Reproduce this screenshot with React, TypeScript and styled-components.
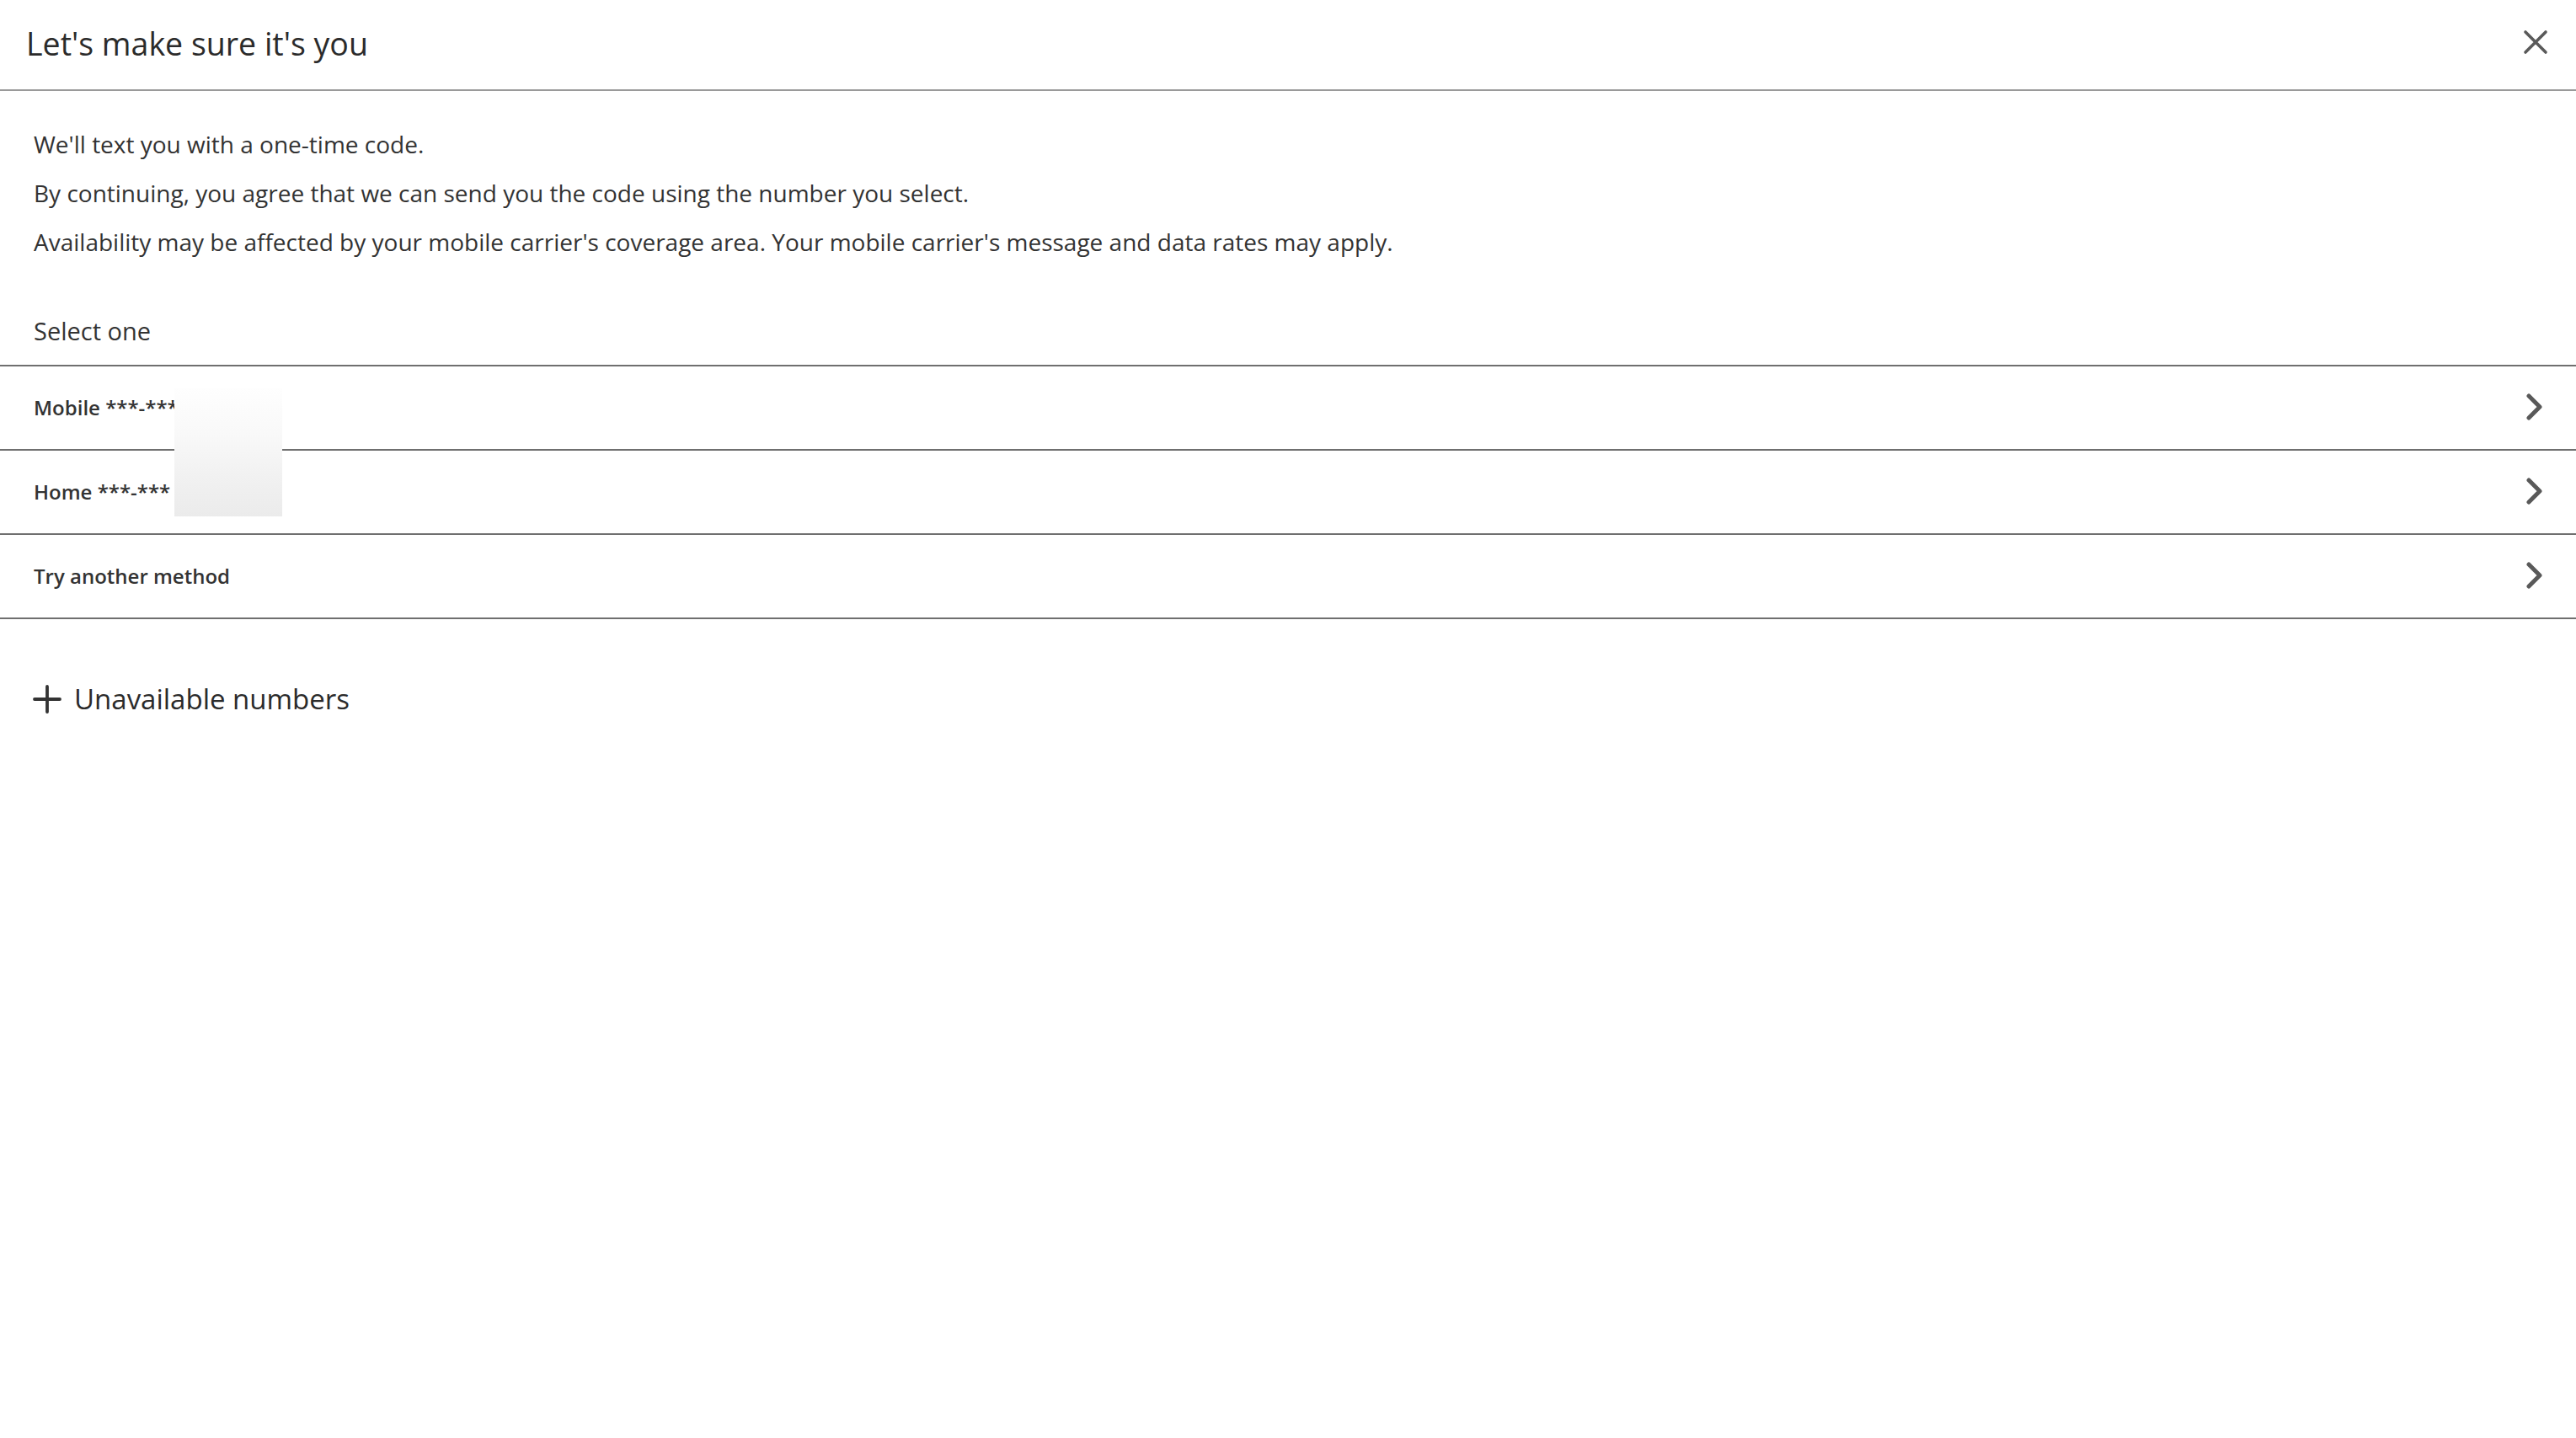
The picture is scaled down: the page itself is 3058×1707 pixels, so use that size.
import React from "react";
import styled, { createGlobalStyle } from "styled-components";

const Global = createGlobalStyle`
  html, body {
    margin: 0;
    padding: 0;
    background: #ffffff;
  }
  body {
    font-family: "Open Sans", Lato, "Liberation Sans", sans-serif;
    color: #333333;
  }
`;

const rows = [
    { id: "mobile", label: "Mobile ***-***" },
    { id: "home", label: "Home ***-***" },
    { id: "other", label: "Try another method" }
];

const Close = () => (
    <svg width="30" height="30" viewBox="0 0 30 30">
        <path d="M3 3 L27 27 M27 3 L3 27" stroke="#595959" strokeWidth="3.6" strokeLinecap="round" fill="none" />
    </svg>
);

const Chevron = () => (
    <svg width="22" height="32" viewBox="0 0 22 32">
        <path d="M4 3 L17 16 L4 29" stroke="#595959" strokeWidth="5" strokeLinecap="round" strokeLinejoin="round" fill="none" />
    </svg>
);

const Plus = () => (
    <svg width="34" height="34" viewBox="0 0 34 34">
        <path d="M17 2 V32 M2 17 H32" stroke="#333333" strokeWidth="3.8" strokeLinecap="round" fill="none" />
    </svg>
);

export default () => {
    return (
        <Page>
            <Global />
            <Header>
                <Title>Let's make sure it's you</Title>
                <CloseButton type="button" aria-label="Close">
                    <Close />
                </CloseButton>
            </Header>
            <Body>
                <Text>We'll text you with a one-time code.</Text>
                <Text>By continuing, you agree that we can send you the code using the number you select.</Text>
                <Text>Availability may be affected by your mobile carrier's coverage area. Your mobile carrier's message and data rates may apply.</Text>
            </Body>
            <Label>Select one</Label>
            <List>
                {rows.map((row) => {
                    return (
                        <Row key={row.id} type="button">
                            <RowText>{row.label}</RowText>
                            <Chevron />
                        </Row>
                    );
                })}
                <Redacted />
            </List>
            <Expand type="button">
                <Plus />
                <span>Unavailable numbers</span>
            </Expand>
        </Page>
    );
};

const Page = styled.div`
  width: 100%;
  min-height: 100vh;
  background: #ffffff;
`;

const Header = styled.div`
  height: 106px;
  display: flex;
  align-items: center;
  justify-content: space-between;
  padding: 0 33px 0 31px;
  border-bottom: 2px solid #9a9a9a;
`;

const Title = styled.h1`
  margin: 0 0 4px;
  font-size: 37.5px;
  font-weight: 400;
  color: #2b2b2b;
`;

const CloseButton = styled.button`
  border: 0;
  background: none;
  padding: 0;
  display: flex;
  margin-top: -6px;
  cursor: pointer;
`;

const Body = styled.div`
  padding: 34px 40px 0;
`;

const Text = styled.p`
  margin: 0;
  font-size: 28px;
  line-height: 58px;
  color: #333333;
`;

const Label = styled.div`
  margin-top: 57px;
  padding: 0 40px 20px;
  font-size: 29px;
  line-height: 40px;
  color: #333333;
`;

const List = styled.div`
  position: relative;
  border-top: 2px solid #6f6f6f;
`;

const Row = styled.button`
  width: 100%;
  height: 100px;
  display: flex;
  align-items: center;
  justify-content: space-between;
  padding: 0 38px 2px 40px;
  border: 0;
  border-bottom: 2px solid #6f6f6f;
  background: #ffffff;
  font-family: inherit;
  cursor: pointer;
`;

const RowText = styled.span`
  font-size: 24px;
  font-weight: 600;
  color: #333333;
`;

const Redacted = styled.div`
  position: absolute;
  left: 207px;
  top: 25px;
  width: 128px;
  height: 153px;
  background: linear-gradient(180deg, #fefefe 0%, #f9f9f9 35%, #f1f1f1 70%, #ebebeb 100%);
`;

const Expand = styled.button`
  margin-top: 72px;
  display: flex;
  align-items: center;
  gap: 15px;
  padding: 0 0 0 39px;
  border: 0;
  background: none;
  font-family: inherit;
  font-size: 33px;
  color: #2b2b2b;
  cursor: pointer;
`;
